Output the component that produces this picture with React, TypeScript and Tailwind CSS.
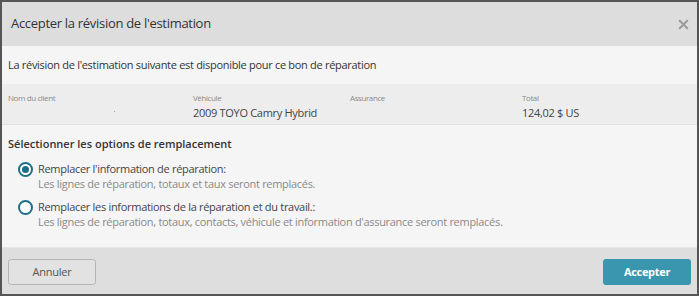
import { X } from 'lucide-react';

const font = { fontFamily: '"Open Sans", "Noto Sans", sans-serif' };

function Radio({ checked }: { checked?: boolean }) {
  return (
    <span className="mt-[1px] flex h-[15px] w-[15px] shrink-0 items-center justify-center rounded-full border-2 border-[#1c6f87] bg-white">
      {checked && <span className="h-[7px] w-[7px] rounded-full bg-[#1c6f87]" />}
    </span>
  );
}

function InfoCol({ label, value, children }: { label: string; value: string; children?: React.ReactNode }) {
  return (
    <div className="relative">
      <div className="text-[8px] leading-[12px] tracking-[-0.4px] text-[#8a8a8a]">{label}</div>
      <div className="h-[18px] text-[11px] leading-[18px] tracking-[-0.3px] text-[#444]">{value}</div>
      {children}
    </div>
  );
}

export default function App() {
  return (
    <div
      className="flex h-[296px] w-[699px] flex-col border-2 border-[#555] bg-[#f5f5f5] text-[#333]"
      style={font}
    >
      <div className="flex h-[44px] shrink-0 items-center justify-between bg-[#dddddd] pl-[9px] pr-[6px]">
        <h1 className="text-[13px] tracking-[-0.3px] text-[#333]">Accepter la révision de l'estimation</h1>
        <X className="h-[15px] w-[15px] text-[#9a9a9a]" strokeWidth={3.2} />
      </div>

      <div className="flex h-[38px] shrink-0 items-center px-[6px] text-[11px] tracking-[-0.3px] text-[#333]">
        La révision de l'estimation suivante est disponible pour ce bon de réparation
      </div>

      <div className="grid h-[41px] shrink-0 grid-cols-[185px_157px_172px_1fr] border-b border-[#e2e2e2] bg-[#eeeded] px-[6px] pt-[8px]">
        <InfoCol label="Nom du client" value="">
          <span className="absolute left-[106px] top-[19px] h-[1px] w-[1px] bg-[#aaa]" />
        </InfoCol>
        <InfoCol label="Véhicule" value="2009 TOYO Camry Hybrid" />
        <InfoCol label="Assurance" value="" />
        <InfoCol label="Total" value="124,02 $ US" />
      </div>

      <div className="flex-1 px-[6px] pt-[11px]">
        <div className="text-[11px] font-semibold text-[#333]">Sélectionner les options de remplacement</div>
        <div className="mt-[8px] flex flex-col gap-[8px] pl-[10px] text-[11px] leading-[15px] tracking-[-0.3px]">
          <label className="flex gap-[5px]">
            <Radio checked />
            <span>
              <span className="block text-[#444]">Remplacer l'information de réparation:</span>
              <span className="block text-[#8a8a8a]">Les lignes de réparation, totaux et taux seront remplacés.</span>
            </span>
          </label>
          <label className="flex gap-[5px]">
            <Radio />
            <span>
              <span className="block text-[#444]">Remplacer les informations de la réparation et du travail.:</span>
              <span className="block text-[#8a8a8a]">
                Les lignes de réparation, totaux, contacts, véhicule et information d'assurance seront remplacés.
              </span>
            </span>
          </label>
        </div>
      </div>

      <div className="flex h-[47px] shrink-0 items-center justify-between border-t border-[#e6e6e6] bg-[#dedede] px-[6px] pt-[2px]">
        <button className="h-[26px] w-[88px] rounded-[3px] border border-[#b5b5b5] bg-[#e2e2e2] text-[11px] tracking-[-0.2px] text-[#555]">
          Annuler
        </button>
        <button className="h-[26px] w-[88px] rounded-[3px] bg-[#3a96ae] text-[11px] font-bold tracking-[-0.3px] text-white">
          Accepter
        </button>
      </div>
    </div>
  );
}
